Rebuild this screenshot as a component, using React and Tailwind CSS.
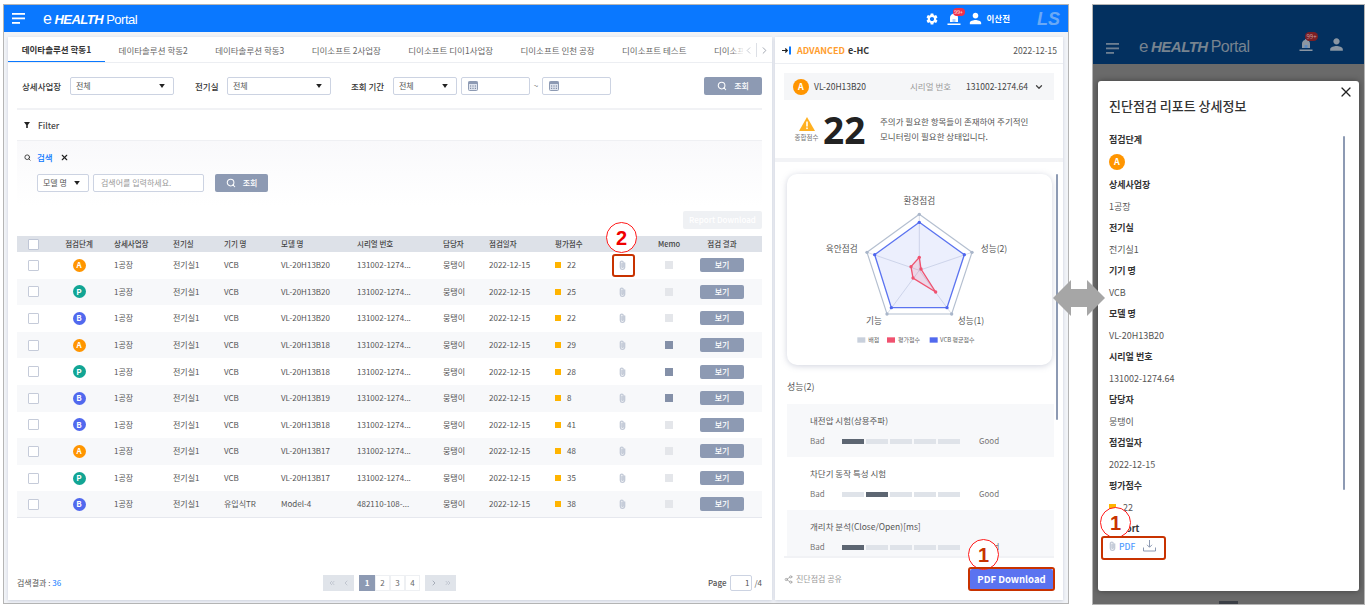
import React from "react";
import { Search, X, ChevronDown, ChevronLeft, ChevronRight, ChevronsLeft, ChevronsRight, Share2 } from "lucide-react";
import { MdSettings, MdPerson } from "react-icons/md";

const rows = [
  ["A", "전기실1", "VCB", "VL-20H13B20", "131002-1274...", 22, false],
  ["P", "전기실1", "VCB", "VL-20H13B20", "131002-1274...", 25, false],
  ["B", "전기실1", "VCB", "VL-20H13B20", "131002-1274...", 22, false],
  ["A", "전기실1", "VCB", "VL-20H13B18", "131002-1274...", 29, true],
  ["P", "전기실1", "VCB", "VL-20H13B18", "131002-1274...", 28, true],
  ["B", "전기실1", "VCB", "VL-20H13B19", "131002-1274...", 8, true],
  ["B", "전기실1", "VCB", "VL-20H13B18", "131002-1274...", 41, false],
  ["A", "전기실1", "VCB", "VL-20H13B17", "131002-1274...", 48, false],
  ["P", "전기실1", "VCB", "VL-20H13B17", "131002-1274...", 35, false],
  ["B", "전기실1", "유입식TR", "Model-4", "482110-108-...", 38, false],
];

const tabs = [
  "데이타솔루션 학동1",
  "데이타솔루션 학동2",
  "데이타솔루션 학동3",
  "디이소프트 2사업장",
  "디이소프트 디이1사업장",
  "디이소프트 인천 공장",
  "디이소프트 테스트",
  "디이소프",
];

const gradeColor = { A: "bg-[#ff9500]", P: "bg-[#12a594]", B: "bg-[#5169ee]" };
const tableCols = "grid grid-cols-[44px_53px_59px_51px_57px_76px_86px_46px_66px_45px_45px_48px_58px_1fr]";

const Grade = ({ g, big }) => (
  <span className={`flex items-center justify-center rounded-full text-white font-bold ${gradeColor[g]} ${big ? "w-4 h-4 text-[9px]" : "w-[13px] h-[13px] text-[8px]"}`}>
    {g}
  </span>
);

const Caret = () => (
  <svg width="6" height="4" viewBox="0 0 7 5">
    <path d="M0 0h7L3.5 5z" fill="#222" />
  </svg>
);

const Select = ({ label, w }) => (
  <div className={`flex items-center justify-between h-[18px] ${w} px-[5px] pr-[8px] bg-white border border-[#ccd3e2] rounded-[2px] text-[8px] font-normal text-[#555]`}>
    <span>{label}</span>
    <Caret />
  </div>
);

const Calendar = () => (
  <svg width="10" height="10" viewBox="0 0 10 10">
    <rect x="0.5" y="0.5" width="9" height="9" rx="1" fill="#dfe4ee" stroke="#8d9ab3" />
    <rect x="0.5" y="0.5" width="9" height="2.5" fill="#8d9ab3" />
    <path d="M2 5h1.2M4.4 5h1.2M6.8 5H8M2 7.3h1.2M4.4 7.3h1.2M6.8 7.3H8" stroke="#6d7a94" strokeWidth="1" />
  </svg>
);

const DateInput = () => (
  <div className="flex items-center h-[18px] w-[69px] pl-[6px] bg-white border border-[#ccd3e2] rounded-[2px]">
    <Calendar />
  </div>
);

const QueryButton = ({ w }) => (
  <div className={`flex items-center justify-center gap-[7px] h-[18px] ${w} bg-[#8d9ab3] rounded-[2px] text-white text-[8px] font-medium`}>
    <Search size={10} strokeWidth={2.5} />
    <span>조회</span>
  </div>
);

const Clip = () => (
  <svg width="7" height="10" viewBox="0 0 8 11" fill="none">
    <path d="M6.500 3v5a2.500 2.500 0 0 1-5 0V2.800a1.700 1.700 0 0 1 3.400 0V7.500a.8.8 0 0 1-1.600 0V3.500" stroke="#c3cad7" strokeWidth="1.500" strokeLinecap="round" />
  </svg>
);

const Bell = ({ fill }) => (
  <svg width="14" height="14" viewBox="0 0 14 14">
    <path d="M7 1c.8 0 1.200.5 1.300 1 1.800.6 2.700 2 2.700 4v4H3V6c0-2 .9-3.400 2.700-4C5.800 1.500 6.200 1 7 1z" fill={fill} />
    <rect x="5.500" y="7" width="3" height="3" fill="#0a78ff" opacity="0.35" />
    <rect x="0.500" y="11.500" width="13" height="1.500" fill={fill} />
  </svg>
);

const Hamburger = ({ color }) => (
  <svg width="13" height="11" viewBox="0 0 13 11">
    <rect width="13" height="1.800" fill={color} />
    <rect y="4.500" width="13" height="1.800" fill={color} />
    <rect y="9" width="8" height="1.800" fill={color} />
  </svg>
);

const Logo = ({ eSize, main, sub, className }) => (
  <div className={`flex items-baseline font-['Liberation_Sans',sans-serif] tracking-[-0.5px] ${className}`}>
    <span className={`font-normal mr-[3px] ${eSize}`}>e</span>
    <span className={`italic font-bold ${main}`}>HEALTH</span>
    <span className={`ml-[3px] ${sub}`}>Portal</span>
  </div>
);

const Radar = () => (
  <svg width="265" height="191" viewBox="0 0 795 573" className="block">
    <g transform="translate(-39 -27)">
      <g fill="none" stroke="#cbd2df" strokeWidth="2">
        <path d="M436 316V148M436 316L594 262M436 316L533 447M436 316L339 447M436 316L279 262" />
      </g>
      <path d="M436 148L594 262L533 447H339L279 262Z" fill="none" stroke="#b4bfd0" strokeWidth="3.500" />
      <path d="M436 172L571 269L519 428H352L302 269Z" fill="#5169ee" fillOpacity="0.11" stroke="#5b73f0" strokeWidth="4" />
      <path d="M436 277L441 312L485 381L417 339L411 305Z" fill="#f0526f" fillOpacity="0.15" stroke="#f0526f" strokeWidth="4" />
      {[[436, 148], [594, 262], [533, 447], [339, 447], [279, 262]].map(([x, y]) => (
        <circle key={`o${x}`} cx={x} cy={y} r="5" fill="#a9b6ca" />
      ))}
      {[[436, 172], [571, 269], [519, 428], [352, 428], [302, 269]].map(([x, y]) => (
        <circle key={`b${x}`} cx={x} cy={y} r="5" fill="#4f66ee" />
      ))}
      {[[436, 277], [441, 312], [485, 381], [417, 339], [411, 305]].map(([x, y]) => (
        <circle key={`r${x}`} cx={x} cy={y} r="5" fill="#f0526f" />
      ))}
      <g fill="#555" fontSize="26" textAnchor="middle">
        <text x="436" y="118">환경점검</text>
        <text x="660" y="262">성능(2)</text>
        <text x="591" y="477">성능(1)</text>
        <text x="300" y="476">기능</text>
        <text x="203" y="261">육안점검</text>
      </g>
      <g fontSize="18" fill="#666">
        <rect x="250" y="517" width="24" height="16" fill="#c8d0dc" />
        <text x="283" y="530">배점</text>
        <rect x="339" y="517" width="24" height="16" fill="#f0526f" />
        <text x="372" y="530">평가점수</text>
        <rect x="467" y="517" width="24" height="16" fill="#5169ee" />
        <text x="498" y="530">VCB 평균점수</text>
      </g>
    </g>
  </svg>
);

const Gauge = ({ title, on, bg, clip }) => (
  <div className={`${clip ? "h-[46px]" : "h-[53px]"} px-[23px] pt-[10px] ${bg ? "bg-[#f7f8fa]" : "bg-white"}`}>
    <div className="text-[8.500px] leading-[13px] text-[#555]">{title}</div>
    <div className="flex items-center mt-[8px] text-[8px] leading-[12px] text-[#777]">
      <span className="w-[32px]">Bad</span>
      {[0, 1, 2, 3, 4].map((i) => (
        <span key={i} className={`w-[22px] h-[5px] mr-[2px] ${i === on ? "bg-[#5d6672]" : "bg-[#dfe3e9]"}`} />
      ))}
      <span className="ml-[17px]">Good</span>
    </div>
  </div>
);

const mobileFields = [
  ["상세사업장", "1공장"],
  ["전기실", "전기실1"],
  ["기기 명", "VCB"],
  ["모델 명", "VL-20H13B20"],
  ["시리얼 번호", "131002-1274.64"],
  ["담당자", "뭉탱이"],
  ["점검일자", "2022-12-15"],
];

const Field = ({ label, children }) => (
  <div className="h-[43px]">
    <div className="h-[22px] flex items-center text-[9px] font-bold text-[#333]">{label}</div>
    <div className="h-[21px] flex items-center text-[9px] text-[#555]">{children}</div>
  </div>
);

const Marker = ({ n, className }) => (
  <div className={`absolute w-[31px] h-[31px] rounded-full bg-white border border-[#ff1a1a] flex items-center justify-center text-[20px] font-bold font-['Liberation_Sans',sans-serif] ${className}`}>
    {n}
  </div>
);

const App = () => {
  return (
    <div className="relative w-[1371px] h-[610px] bg-white overflow-hidden font-['Noto_Sans_CJK_KR','Noto_Sans',sans-serif]">
      <div className="flex pt-[4px] pl-[3px]">
        {/* desktop screen */}
        <div className="w-[1066px] h-[600px] border border-[#b5b5b5] flex flex-col bg-[#f1f3f7]">
          <header className="h-[27px] shrink-0 bg-[#0a78ff] flex items-center pl-[8px] pr-[7px] text-white">
            <Hamburger color="#fff" />
            <Logo className="ml-[18px]" eSize="text-[16px]" main="text-[13px]" sub="text-[13px] font-normal" />
            <div className="ml-auto flex items-center">
              <MdSettings size={14} className="mr-[8px]" />
              <div className="relative mr-[3px]">
                <Bell fill="#fff" />
                <span className="absolute -top-[4px] left-[6px] w-[12px] h-[8px] rounded-full bg-[#f0304a] text-[5px] leading-[8px] text-center">99+</span>
              </div>
              <MdPerson size={17} className="ml-[3px]" />
              <span className="ml-[3px] text-[8.500px] font-bold">이산전</span>
              <span className="ml-[27px] w-[24px] text-[18px] leading-[18px] italic font-bold text-[#6aa9f5] font-['Liberation_Sans',sans-serif]">LS</span>
            </div>
          </header>

          <div className="flex-1 flex pt-[5px] pl-[4px] pr-[4px] pb-[3px] gap-[3px] min-h-0">
            {/* list card */}
            <section className="w-[764px] bg-white flex flex-col shadow-[0_1px_3px_rgba(120,130,160,0.3)]">
              <div className="relative h-[26px] shrink-0 flex border-b border-[#eceef2] overflow-hidden">
                {tabs.map((t, i) => (
                  <div key={t} className={`shrink-0 px-[13.700px] h-[26px] flex items-center text-[8.500px] ${i === 0 ? "font-bold text-[#333] border-b-2 border-[#0a78ff]" : "text-[#666]"}`}>
                    {t}
                  </div>
                ))}
                <div className="absolute right-0 top-0 h-[26px] w-[29px] flex items-center bg-white shadow-[-6px_0_8px_rgba(255,255,255,0.95)] text-[#c4c8d0]">
                  <ChevronLeft size={11} />
                  <span className="w-px h-[14px] bg-[#dde0e6] mx-[2px]" />
                  <ChevronRight size={11} className="text-[#9aa0ab]" />
                </div>
              </div>

              <div className="flex-1 flex flex-col pl-[9px] pr-[10px] min-h-0">
                <div className="h-[47px] shrink-0 flex items-center pl-[5px] pt-[1px] border-b-2 border-[#f1f2f5] text-[8.500px] font-medium text-[#333]">
                  <span className="w-[48px]">상세사업장</span>
                  <Select label="전체" w="w-[104px]" />
                  <span className="ml-[21px] w-[32px]">전기실</span>
                  <Select label="전체" w="w-[104px]" />
                  <span className="ml-[20px] w-[42px]">조회 기간</span>
                  <Select label="전체" w="w-[64px]" />
                  <span className="ml-[4px]"><DateInput /></span>
                  <span className="w-[12px] text-center text-[8px] text-[#777] font-normal">~</span>
                  <DateInput />
                  <span className="ml-auto"><QueryButton w="w-[58px]" /></span>
                </div>

                <div className="h-[31px] shrink-0 flex items-center pl-[7px] border-b border-[#eff0f3] text-[8.500px] font-medium text-[#444]">
                  <svg width="6" height="6" viewBox="0 0 6 6"><path d="M0 0h6L3.800 3v3H2.200V3z" fill="#222" /></svg>
                  <span className="ml-[8px]">Filter</span>
                </div>

                <div className="h-[65px] shrink-0 bg-gradient-to-b from-[#f9f9fb] to-white pl-[7px]">
                  <div className="flex items-center h-[32px] text-[8.500px] text-[#0a78ff] font-medium">
                    <Search size={7} strokeWidth={3} className="text-[#333]" />
                    <span className="ml-[6px]">검색</span>
                    <X size={9} strokeWidth={3} className="ml-[7px] text-[#222]" />
                  </div>
                  <div className="flex items-center pl-[13px] mt-[1px]">
                    <Select label="모델 명" w="w-[52px]" />
                    <div className="ml-[4px] w-[111px] h-[18px] flex items-center px-[7px] bg-white border border-[#ccd3e2] rounded-[2px] text-[8px] text-[#999]">
                      검색어를 입력하세요.
                    </div>
                    <span className="ml-[11px]"><QueryButton w="w-[53px]" /></span>
                  </div>
                </div>

                <div className="h-[30px] shrink-0 flex justify-end pt-[5px]">
                  <div className="w-[79px] h-[18px] flex items-center justify-center rounded-[2px] bg-[#eff1f4] text-[8px] font-medium text-white">Report Download</div>
                </div>

                <div className={`${tableCols} h-[16px] shrink-0 items-center bg-[#dde1e8] text-[7.500px] font-medium text-[#444]`}>
                  <span className="pl-[11px]"><span className="block w-[11px] h-[11px] bg-white border border-[#bfc6d6] rounded-[1px]" /></span>
                  <span className="w-[36px] text-center">점검단계</span>
                  <span>상세사업장</span>
                  <span>전기실</span>
                  <span>기기 명</span>
                  <span>모델 명</span>
                  <span>시리얼 번호</span>
                  <span>담당자</span>
                  <span>점검일자</span>
                  <span>평가점수</span>
                  <span />
                  <span className="text-center">Memo</span>
                  <span className="text-center">점검 결과</span>
                  <span />
                </div>
                {rows.map((r, i) => (
                  <div key={i} className={`${tableCols} h-[26.600px] shrink-0 items-center text-[8px] text-[#555] ${i % 2 === 1 ? "bg-[#f7f8fa]" : "bg-white"} ${i === rows.length - 1 ? "border-b border-[#e6e8ee]" : ""}`}>
                    <span className="pl-[11px]"><span className="block w-[11px] h-[11px] bg-white border border-[#c5cbd9] rounded-[1px]" /></span>
                    <span className="w-[36px] flex justify-center"><Grade g={r[0]} /></span>
                    <span>1공장</span>
                    <span>{r[1]}</span>
                    <span>{r[2]}</span>
                    <span>{r[3]}</span>
                    <span>{r[4]}</span>
                    <span>뭉탱이</span>
                    <span>2022-12-15</span>
                    <span className="flex items-center">
                      <span className="w-[6px] h-[6px] bg-[#ffb400] mr-[6px]" />
                      {r[5]}
                    </span>
                    <span className="flex justify-center"><Clip /></span>
                    <span className="flex justify-center">
                      <span className={`w-[8px] h-[8px] ${r[6] ? "bg-[#8490a8]" : "bg-[#e4e6ea]"}`} />
                    </span>
                    <span className="flex justify-center">
                      <span className="w-[44px] h-[14px] flex items-center justify-center rounded-[2px] bg-[#8d9ab3] text-white text-[8px] font-medium">보기</span>
                    </span>
                    <span />
                  </div>
                ))}

                <div className="mt-auto h-[34px] shrink-0 flex items-center text-[8px] text-[#555]">
                  <span className="w-[306px]">검색결과 : <span className="text-[#0a78ff]">36</span></span>
                  <div className="flex items-center h-[16px] text-[#666]">
                    <div className="flex items-center justify-center gap-[6px] w-[31px] h-[16px] bg-[#e0e4ea] text-[#b0b6c2]">
                      <ChevronsLeft size={8} />
                      <ChevronLeft size={8} />
                    </div>
                    <span className="w-[5px]" />
                    <span className="w-[16px] h-[16px] flex items-center justify-center bg-[#8d9ab3] text-white font-bold">1</span>
                    {[2, 3, 4].map((n) => (
                      <span key={n} className="w-[15px] h-[16px] flex items-center justify-center border border-[#eef0f3]">{n}</span>
                    ))}
                    <span className="w-[5px]" />
                    <div className="flex items-center justify-center gap-[6px] w-[31px] h-[16px] bg-[#e0e4ea] text-[#8b92a0]">
                      <ChevronRight size={8} />
                      <ChevronsRight size={8} className="text-[#b0b6c2]" />
                    </div>
                  </div>
                  <div className="ml-auto flex items-center">
                    <span className="font-medium">Page</span>
                    <span className="ml-[4px] w-[22px] h-[16px] flex items-center justify-end pr-[2px] border border-[#ccd3e2] rounded-[2px]">1</span>
                    <span className="ml-[2px]">/4</span>
                  </div>
                </div>
              </div>
            </section>

            {/* detail card */}
            <section className="w-[288px] bg-white flex flex-col shadow-[0_1px_3px_rgba(120,130,160,0.3)]">
              <div className="h-[27px] shrink-0 flex items-center pl-[7px] pr-[6px] pt-[1px] border-b border-[#eceef2]">
                <svg width="9" height="9" viewBox="0 0 9 9">
                  <path d="M0 4.500h5M3.300 2.500l2 2-2 2" stroke="#222" strokeWidth="1.200" fill="none" />
                  <rect x="7" y="0.500" width="2" height="8" fill="#0a78ff" />
                </svg>
                <span className="ml-[6px] text-[9px] font-bold text-[#ff9d2e]">ADVANCED</span>
                <span className="ml-[3px] text-[9px] font-bold text-[#333]">e-HC</span>
                <span className="ml-auto text-[8.500px] text-[#555]">2022-12-15</span>
              </div>
              <div className="mx-[9px] mt-[9px] h-[27px] shrink-0 flex items-center pl-[9px] pr-[10px] bg-[#f5f6f8] text-[8.500px] text-[#444]">
                <Grade g="A" big />
                <span className="ml-[5px]">VL-20H13B20</span>
                <span className="ml-auto text-[#999]">시리얼 번호</span>
                <span className="ml-[15px]">131002-1274.64</span>
                <ChevronDown size={10} strokeWidth={3} className="ml-[6px]" />
              </div>
              <div className="h-[62px] shrink-0 flex items-center pl-[18px] border-b-4 border-[#f2f3f6]">
                <div className="flex flex-col items-center w-[27px]">
                  <svg width="16" height="14" viewBox="0 0 16 14">
                    <path d="M8 0l8 14H0z" fill="#ffb020" />
                    <rect x="7.200" y="4.500" width="1.600" height="5" fill="#fff" />
                    <rect x="7.200" y="10.500" width="1.600" height="1.600" fill="#fff" />
                  </svg>
                  <span className="mt-[2px] text-[6.500px] leading-[9px] text-[#777] whitespace-nowrap">종합점수</span>
                </div>
                <span className="ml-[3px] w-[43px] pt-[2px] text-[37px] leading-[40px] font-bold text-[#222] font-['Noto_Sans',sans-serif]">22</span>
                <p className="ml-[14px] text-[8.500px] leading-[15px] text-[#555]">
                  주의가 필요한 항목들이 존재하여 주기적인<br />모니터링이 필요한 상태입니다.
                </p>
              </div>
              <div className="relative flex-1 min-h-0 overflow-hidden pl-[12px] pr-[9px] pt-[12px]">
                <div className="w-[265px] h-[191px] rounded-[10px] bg-white shadow-[0_1px_6px_rgba(120,130,160,0.35)]">
                  <Radar />
                </div>
                <div className="mt-[14px] h-[16px] text-[9px] leading-[16px] text-[#555]">성능(2)</div>
                <div className="mt-[9px] w-[267px]">
                  <Gauge title="내전압 시험(상용주파)" on={0} bg />
                  <Gauge title="차단기 동작 특성 시험" on={1} />
                  <Gauge title="개리차 분석(Close/Open)[ms]" on={0} bg clip />
                </div>
                <span className="absolute top-[12px] right-[5px] w-[2.500px] h-[246px] rounded-full bg-[#8d9ab3]" />
              </div>
              <div className="h-[44px] shrink-0 mx-[9px] flex items-center justify-between border-t-2 border-[#f1f2f5] text-[8px] text-[#999]">
                <div className="flex items-center gap-[3px]">
                  <Share2 size={9} />
                  <span>진단점검 공유</span>
                </div>
                <div className="w-[83px] h-[21px] mr-[1px] flex items-center justify-center rounded-[2px] bg-[#5b73f0] text-white text-[9.500px] font-bold">
                  PDF Download
                </div>
              </div>
            </section>
          </div>
        </div>

        {/* mobile screen */}
        <div className="ml-[23px] w-[273px] h-[601px] border border-[#b5b5b5] bg-[#6a6a6a] flex flex-col">
          <header className="h-[59px] shrink-0 bg-[#03305f] flex items-end pb-[10px] pl-[13px] pr-[18px]">
            <Hamburger color="#6e7f92" />
            <Logo className="ml-[20px] leading-[15px] text-[#77838f]" eSize="text-[17px]" main="text-[15px]" sub="text-[16px] font-normal" />
            <div className="ml-auto flex items-center">
              <div className="relative">
                <Bell fill="#8b96a3" />
                <span className="absolute -top-[6px] left-[6px] w-[13px] h-[9px] rounded-full bg-[#7a1f25] text-[6px] leading-[9px] text-center text-[#c9a0a0]">99+</span>
              </div>
              <MdPerson size={19} className="ml-[14px] text-[#8b96a3]" />
            </div>
          </header>
          <div className="mt-[17px] mx-[5px] w-[261px] h-[510px] shrink-0 bg-white rounded-[3px] pl-[11px] pr-[13px] pt-[10px] relative shadow-[0_0_6px_rgba(0,0,0,0.4)]">
            <X size={16} strokeWidth={1.800} className="absolute top-[3px] right-[5px] text-[#222]" />
            <h2 className="h-[30px] flex items-center text-[13px] font-medium text-[#333]">진단점검 리포트 상세정보</h2>
            <div className="h-[22px] mt-[8px] flex items-center text-[9px] font-bold text-[#333]">점검단계</div>
            <div className="h-[21px] mb-[2px] flex items-center"><Grade g="A" big /></div>
            {mobileFields.map(([label, value]) => (
              <Field key={label} label={label}>{value}</Field>
            ))}
            <Field label="평가점수">
              <span className="w-[7px] h-[7px] bg-[#ffb400] mr-[7px]" />
              22
            </Field>
            <div className="h-[22px] flex items-center text-[9px] font-bold text-[#333]">Report</div>
            <div className="flex items-center text-[8.500px] text-[#4f9bff] font-medium">
              <Clip />
              <span className="ml-[3px]">PDF</span>
              <svg width="13" height="12" viewBox="0 0 13 12" fill="none" className="ml-[8px]">
                <path d="M6.500 0v7M4 4.800l2.500 2.500L9 4.800M.5 7.500V11h12V7.500" stroke="#8d9ab3" strokeWidth="1" />
              </svg>
            </div>
            <span className="absolute top-[55px] right-[14px] w-[2.500px] h-[354px] rounded-full bg-[#8d9ab3]" />
          </div>
          <span className="mx-auto mt-auto w-[19px] h-[3px] bg-[#3b3f46]" />
        </div>
      </div>

      {/* callouts drawn over both screens */}
      <svg width="52" height="36" viewBox="0 0 52 36" className="absolute left-[1053px] top-[280px]">
        <path d="M0 18L18 0V9H34V0L52 18L34 36V27H18V36Z" fill="#a6a6a6" />
      </svg>
      <Marker n="2" className="left-[606px] top-[222px] text-[#f00000]" />
      <div className="absolute left-[612px] top-[254px] w-[23px] h-[23px] border-2 border-[#c83200] rounded-[3px]" />
      <Marker n="1" className="left-[968px] top-[539px] text-[#c83200]" />
      <div className="absolute left-[968px] top-[567px] w-[87px] h-[24px] border-2 border-[#c83200] rounded-[3px]" />
      <Marker n="1" className="left-[1100px] top-[507px] text-[#c83200]" />
      <div className="absolute left-[1101px] top-[536px] w-[65px] h-[24px] border-2 border-[#c83200] rounded-[3px]" />
    </div>
  );
};

export default App;
